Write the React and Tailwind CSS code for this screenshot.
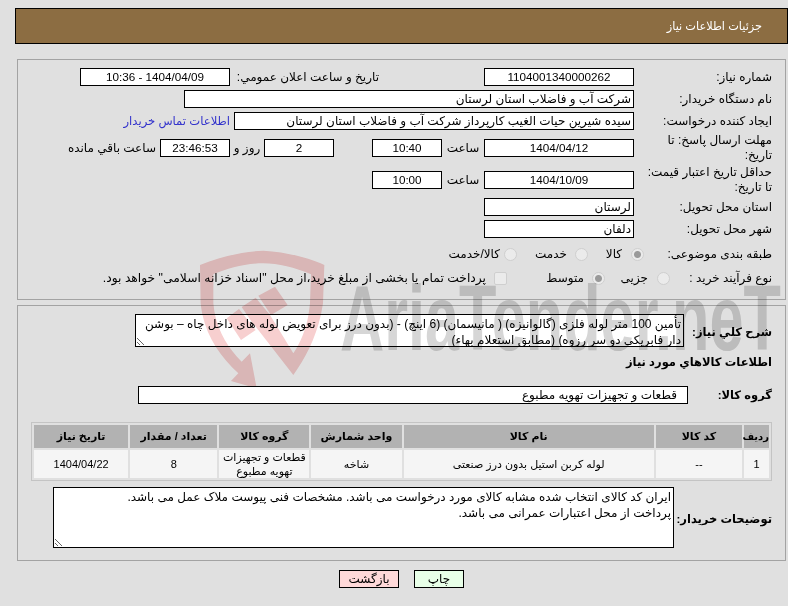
import React from "react";

const Field = ({ w, className = "", children }) => (
  <div className={`h-[18px] ${w} shrink-0 border border-black bg-white leading-[16px] whitespace-nowrap overflow-hidden ${className}`}>{children}</div>
);

const Center = ({ w, className = "", children }) => (
  <Field w={w} className={`text-center text-[11.7px] ${className}`}>{children}</Field>
);

const Label = ({ w = "w-[138px]", bold = false, className = "", children }) => (
  <div className={`${w} shrink-0 leading-[15px] whitespace-nowrap ${bold ? "font-bold text-[11.5px]" : ""} ${className}`}>{children}</div>
);

const Radio = ({ checked = false }) => (
  <input
    type="radio"
    disabled
    defaultChecked={checked}
    className="appearance-none m-0 w-[13px] h-[13px] shrink-0 rounded-full border border-[#cfcfcf] bg-[#ebebeb] checked:bg-[radial-gradient(circle,#9a9a9a_0,#9a9a9a_3px,#ebebeb_4px)]"
  />
);

const rows = [
  ["1", "--", "لوله کربن استیل بدون درز صنعتی", "شاخه", "قطعات و تجهیزات تهویه مطبوع", "8", "1404/04/22"],
];
const heads = ["رديف", "کد کالا", "نام کالا", "واحد شمارش", "گروه کالا", "تعداد / مقدار", "تاريخ نياز"];
const widths = ["w-[25px] text-[10px]", "w-[86px]", "w-[250px]", "w-[90px]", "w-[90px]", "w-[87px]", "w-[94px]"];

export default function App() {
  return (
    <div dir="rtl" className="relative w-[788px] h-[606px] overflow-hidden bg-[#e0e0e0] pl-[15px] pt-[8px] text-[12px] text-black [font-family:'Liberation_Sans','DejaVu_Sans',sans-serif]">
      <div className="h-[36px] border border-black bg-[#8c6d42] pr-[25px] leading-[35px] text-[11.3px] text-white">جزئیات اطلاعات نیاز</div>

      <section className="mt-[15px] ml-[2px] mr-[2px] h-[241px] border border-[#a3a3a3] pr-[13px] pt-[8px]">
        <div className="flex h-[18px] items-center">
          <Label>شماره نیاز:</Label>
          <Center w="w-[150px]">1104001340000262</Center>
          <div className="w-[254px] shrink-0 pr-[105px]">تاریخ و ساعت اعلان عمومي:</div>
          <Center w="w-[150px]">1404/04/09 - 10:36</Center>
        </div>
        <div className="mt-[4px] flex h-[18px] items-center">
          <Label>نام دستگاه خریدار:</Label>
          <Field w="w-[450px]" className="pr-[2px]">شرکت آب و فاضلاب استان لرستان</Field>
        </div>
        <div className="mt-[4px] flex h-[18px] items-center">
          <Label>ایجاد کننده درخواست:</Label>
          <Field w="w-[400px]" className="pr-[2px]">سیده شیرین حیات الغیب کارپرداز شرکت آب و فاضلاب استان لرستان</Field>
          <a className="mr-[4px] text-[11.6px] text-[#3333cc] whitespace-nowrap">اطلاعات تماس خریدار</a>
        </div>
        <div className="mt-[5px] flex h-[26px] items-center">
          <Label>مهلت ارسال پاسخ: تا<br />تاریخ:</Label>
          <Center w="w-[150px]">1404/04/12</Center>
          <div className="w-[42px] shrink-0 text-center">ساعت</div>
          <Center w="w-[70px]">10:40</Center>
          <div className="w-[38px] shrink-0" />
          <Center w="w-[70px]">2</Center>
          <div className="w-[34px] shrink-0 text-center">روز و</div>
          <Center w="w-[70px]" className="bg-[#ffffee]">23:46:53</Center>
          <div className="mr-[4px] whitespace-nowrap">ساعت باقي مانده</div>
        </div>
        <div className="mt-[6px] flex h-[26px] items-center">
          <Label>حداقل تاریخ اعتبار قیمت:<br />تا تاریخ:</Label>
          <Center w="w-[150px]">1404/10/09</Center>
          <div className="w-[42px] shrink-0 text-center">ساعت</div>
          <Center w="w-[70px]">10:00</Center>
        </div>
        <div className="mt-[5px] flex h-[18px] items-center">
          <Label>استان محل تحویل:</Label>
          <Field w="w-[150px]" className="pr-[2px]">لرستان</Field>
        </div>
        <div className="mt-[4px] flex h-[18px] items-center">
          <Label>شهر محل تحویل:</Label>
          <Field w="w-[150px]" className="pr-[2px]">دلفان</Field>
        </div>
        <div className="mt-[7px] flex h-[18px] items-center">
          <Label w="w-[128px]">طبقه بندی موضوعی:</Label>
          <div className="flex w-[56px] shrink-0 items-center gap-[9px]"><Radio checked />کالا</div>
          <div className="flex w-[71px] shrink-0 items-center gap-[8px]"><Radio />خدمت</div>
          <div className="flex items-center gap-[4px]"><Radio />کالا/خدمت</div>
        </div>
        <div className="mt-[6px] flex h-[18px] items-center">
          <Label w="w-[102px]">نوع فرآیند خرید :</Label>
          <div className="flex w-[65px] shrink-0 items-center gap-[9px]"><Radio />جزیی</div>
          <div className="flex w-[98px] shrink-0 items-center gap-[8px]"><Radio checked />متوسط</div>
          <div className="flex items-center gap-[8px] whitespace-nowrap text-[12.3px]">
            <input type="checkbox" disabled className="appearance-none m-0 w-[13px] h-[13px] shrink-0 rounded-[2px] border border-[#cfcfcf] bg-[#ebebeb]" />
            پرداخت تمام یا بخشی از مبلغ خرید،از محل "اسناد خزانه اسلامی" خواهد بود.
          </div>
        </div>
      </section>

      <section className="mt-[5px] ml-[2px] mr-[2px] h-[256px] border border-[#a3a3a3] pr-[13px] pt-[8px]">
        <div className="flex items-center">
          <Label w="w-[88px]" bold className="pt-[3px]">شرح کلي نیاز:</Label>
          <textarea
            readOnly
            rows={2}
            value={'تأمین 100 متر لوله فلزی (گالوانیزه) ( مانیسمان) (6 اینچ) - (بدون درز برای تعویض لوله های داخل چاه – بوشن\nدار فابریکی دو سر رزوه) (مطابق استعلام بهاء)'}
            className="block h-[33px] w-[549px] resize overflow-hidden whitespace-pre border border-black bg-white px-[2px] pt-[1px] pb-0 leading-[16px] outline-none"
          />
        </div>
        <div className="mt-[7px] font-bold text-[11.5px] leading-[16px]">اطلاعات کالاهاي مورد نياز</div>
        <div className="mt-[16px] flex h-[18px] items-center">
          <Label w="w-[84px]" bold>گروه کالا:</Label>
          <Field w="w-[550px]" className="pr-[10px]">قطعات و تجهیزات تهویه مطبوع</Field>
        </div>
        <table className="mt-[18px] w-[741px] table-fixed border-separate border-spacing-[2px] border border-[#c4c4c4] text-[11px]">
          <thead>
            <tr>
              {heads.map((h, i) => (
                <th key={h} className={`${widths[i]} h-[23px] bg-[#b2b2b2] p-0 text-center font-bold whitespace-nowrap`}>{h}</th>
              ))}
            </tr>
          </thead>
          <tbody>
            {rows.map((r) => (
              <tr key={r[0]}>
                {r.map((c, i) => (
                  <td key={i} className="h-[28px] bg-[#f5f5f5] p-0 text-center leading-[14px] whitespace-nowrap">{i === 4 ? <>قطعات و تجهیزات<br />تهویه مطبوع</> : c}</td>
                ))}
              </tr>
            ))}
          </tbody>
        </table>
        <div className="mt-[6px] flex items-center">
          <Label w="w-[98px]" bold className="pt-[4px]">توضیحات خریدار:</Label>
          <textarea
            readOnly
            value={'ایران کد کالای انتخاب شده مشابه کالای مورد درخواست می باشد. مشخصات فنی پیوست ملاک عمل می باشد.\nپرداخت از محل اعتبارات عمرانی می باشد.'}
            className="block h-[61px] w-[621px] resize overflow-hidden whitespace-pre border border-black bg-white px-[2px] pt-[1px] pb-[2px] leading-[16px] outline-none"
          />
        </div>
      </section>

      <div dir="ltr" className="mt-[9px] flex justify-center gap-[15px]">
        <button className="h-[18px] w-[60px] border border-black bg-[#ffd9d9] p-0 text-[12px] leading-[16px]">بازگشت</button>
        <button className="h-[18px] w-[50px] border border-black bg-[#e8ffe8] p-0 text-[12px] leading-[16px]">چاپ</button>
      </div>

      <div className="pointer-events-none absolute left-[195px] top-[245px] h-[141px] w-[140px] overflow-hidden mix-blend-multiply">
        <svg viewBox="0 0 420 450" width="140" height="150" fill="#f7cfcf" aria-hidden="true">
          <path d="M205 17C270 20 340 38 388 60L384 175C372 260 335 335 295 390L172 232L222 205L295 325C325 280 340 230 345 175L348 88C300 68 250 55 205 55C150 55 100 70 55 88L55 175C60 240 90 300 140 350L165 325L185 430L108 408L130 385C70 330 25 260 17 175L15 60C80 35 140 20 205 17Z" />
          <path d="M95 220L132 192L182 255L138 285Z" />
          <path d="M140 186L182 158L222 206L174 236Z" />
          <path d="M190 152L240 125L278 180L228 210Z" />
        </svg>
      </div>
      <div dir="ltr" className="pointer-events-none absolute left-[340px] top-[268px] origin-left scale-x-[0.665] whitespace-nowrap text-[92px] leading-[100px] font-bold text-[#d6d6d6] mix-blend-multiply">AriaTender.neT</div>
    </div>
  );
}
